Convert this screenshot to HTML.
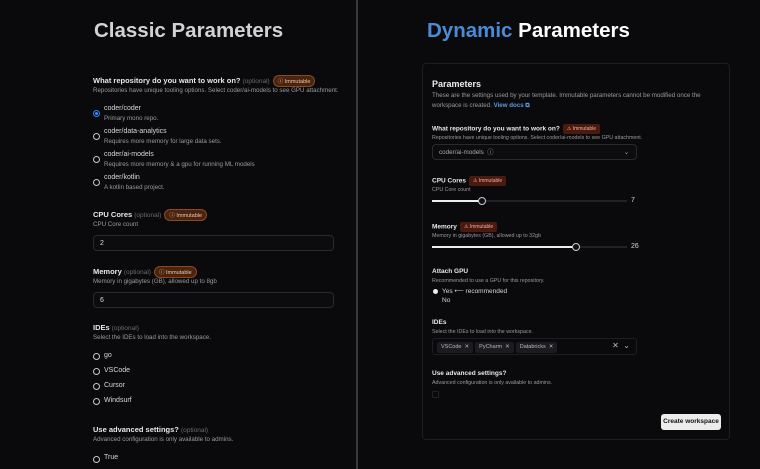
<!DOCTYPE html>
<html><head><meta charset="utf-8"><style>
*{margin:0;padding:0;box-sizing:border-box}
body{width:760px;height:469px;background:#0a0a0c;font-family:"Liberation Sans",sans-serif;color:#e4e4e7;position:relative;overflow:hidden}
.a{position:absolute;white-space:nowrap}
.h1{font-size:20.5px;font-weight:bold;top:19px}
.lbl{font-size:7.5px;font-weight:bold;color:#e8e8e8}
.opt{font-weight:normal;color:#6b6b70;font-size:6.5px}
.sub{font-size:6.2px;color:#9a9aa0}
.imm{display:inline-block;vertical-align:middle;font-size:5.5px;font-weight:normal;color:#f0c8a8;background:#4a2410;border:1px solid #8a4a20;border-radius:7px;padding:1px 4px;margin-left:3px}
.imm2{display:inline-block;vertical-align:middle;font-size:5px;font-weight:normal;color:#f0b0a0;background:#4a1a10;border-radius:2px;padding:2px 4px;margin-left:3px}
.rad{position:absolute;width:7px;height:7px;border:1px solid #c8c8c8;border-radius:50%}
.inp{position:absolute;border:1px solid #2a2a2e;border-radius:4px;background:#0c0c0e;font-size:7px;color:#ddd;padding-left:6px}
.t{font-size:7px;color:#d8d8d8}
.chip{display:inline-block;vertical-align:top;background:#1c1c20;border-radius:2px;font-size:5.5px;line-height:7px;color:#bbb;padding:2px 4px;margin-right:2px}
</style></head><body>
<div class="a" style="left:356px;top:0;width:2px;height:469px;background:#3a3a3e"></div>
<div class="a h1" style="left:94px;color:#d2d2d2">Classic Parameters</div>
<div class="a h1" style="left:427px;color:#fff"><span style="color:#4a8ad6">Dynamic</span> Parameters</div>

<!-- left -->
<div class="a lbl" style="left:93px;top:75px">What repository do you want to work on? <span class="opt">(optional)</span><span class="imm">ⓘ Immutable</span></div>
<div class="a sub" style="left:93px;top:87px">Repositories have unique tooling options. Select coder/ai-models to see GPU attachment.</div>
<div class="rad" style="left:93px;top:110px;border-color:#3b82f6;background:radial-gradient(#3b82f6 40%,transparent 45%)"></div>
<div class="a t" style="left:104px;top:105px">coder/coder</div><div class="a sub" style="left:104px;top:115px">Primary mono repo.</div>
<div class="rad" style="left:93px;top:133px"></div>
<div class="a t" style="left:104px;top:128px">coder/data-analytics</div><div class="a sub" style="left:104px;top:138px">Requires more memory for large data sets.</div>
<div class="rad" style="left:93px;top:156px"></div>
<div class="a t" style="left:104px;top:151px">coder/ai-models</div><div class="a sub" style="left:104px;top:161px">Requires more memory &amp; a gpu for running ML models</div>
<div class="rad" style="left:93px;top:179px"></div>
<div class="a t" style="left:104px;top:174px">coder/kotlin</div><div class="a sub" style="left:104px;top:184px">A kotlin based project.</div>
<div class="a lbl" style="left:93px;top:209px">CPU Cores <span class="opt">(optional)</span><span class="imm">ⓘ Immutable</span></div>
<div class="a sub" style="left:93px;top:221px">CPU Core count</div>
<div class="inp" style="left:93px;top:235px;width:241px;height:16px;line-height:15px">2</div>
<div class="a lbl" style="left:93px;top:266px">Memory <span class="opt">(optional)</span><span class="imm">ⓘ Immutable</span></div>
<div class="a sub" style="left:93px;top:278px">Memory in gigabytes (GB), allowed up to 8gb</div>
<div class="inp" style="left:93px;top:292px;width:241px;height:16px;line-height:15px">6</div>
<div class="a lbl" style="left:93px;top:323px">IDEs <span class="opt">(optional)</span></div>
<div class="a sub" style="left:93px;top:334px">Select the IDEs to load into the workspace.</div>
<div class="rad" style="left:93px;top:353px"></div><div class="a t" style="left:104px;top:352px">go</div>
<div class="rad" style="left:93px;top:368px"></div><div class="a t" style="left:104px;top:367px">VSCode</div>
<div class="rad" style="left:93px;top:383px"></div><div class="a t" style="left:104px;top:382px">Cursor</div>
<div class="rad" style="left:93px;top:398px"></div><div class="a t" style="left:104px;top:397px">Windsurf</div>
<div class="a lbl" style="left:93px;top:425px">Use advanced settings? <span class="opt">(optional)</span></div>
<div class="a sub" style="left:93px;top:436px">Advanced configuration is only available to admins.</div>
<div class="rad" style="left:93px;top:456px"></div><div class="a t" style="left:104px;top:454px">True</div>

<!-- right card -->
<div class="a" style="left:422px;top:63px;width:308px;height:377px;border:1px solid #1e1e22;border-radius:4px"></div>
<div class="a" style="left:432px;top:79px;font-size:9px;font-weight:bold;color:#eee">Parameters</div>
<div class="a sub" style="left:432px;top:91px;line-height:10px">These are the settings used by your template. Immutable parameters cannot be modified once the<br>workspace is created. <span style="color:#5b9be8;font-weight:bold">View docs ⧉</span></div>
<div class="a lbl" style="left:432px;top:124px;font-size:6.5px">What repository do you want to work on?<span class="imm2">⚠ Immutable</span></div>
<div class="a sub" style="left:432px;top:135px;font-size:5.3px">Repositories have unique tooling options. Select coder/ai-models to see GPU attachment.</div>
<div class="inp" style="left:432px;top:144px;width:205px;height:16px;line-height:15px;font-size:6.3px;color:#aaa">coder/ai-models &nbsp;ⓘ<span style="position:absolute;right:7px">⌄</span></div>
<div class="a lbl" style="left:432px;top:176px;font-size:6.5px">CPU Cores<span class="imm2">⚠ Immutable</span></div>
<div class="a sub" style="left:432px;top:187px;font-size:5.3px">CPU Core count</div>
<div class="a" style="left:432px;top:200px;width:195px;height:2px;background:#222"></div>
<div class="a" style="left:432px;top:200px;width:50px;height:2px;background:#eee"></div>
<div class="a" style="left:478px;top:197px;width:8px;height:8px;border-radius:50%;background:#111;border:1px solid #ccc"></div>
<div class="a t" style="left:631px;top:197px">7</div>
<div class="a lbl" style="left:432px;top:222px;font-size:6.5px">Memory<span class="imm2">⚠ Immutable</span></div>
<div class="a sub" style="left:432px;top:233px;font-size:5.3px">Memory in gigabytes (GB), allowed up to 32gb</div>
<div class="a" style="left:432px;top:246px;width:195px;height:2px;background:#222"></div>
<div class="a" style="left:432px;top:246px;width:144px;height:2px;background:#eee"></div>
<div class="a" style="left:572px;top:243px;width:8px;height:8px;border-radius:50%;background:#111;border:1px solid #ccc"></div>
<div class="a t" style="left:631px;top:243px">26</div>
<div class="a lbl" style="left:432px;top:268px;font-size:6.5px">Attach GPU</div>
<div class="a sub" style="left:432px;top:278px;font-size:5.3px">Recommended to use a GPU for this repository.</div>
<div class="a" style="left:433px;top:289px;width:5px;height:5px;border-radius:50%;background:#eee"></div>
<div class="a t" style="left:442px;top:287px;font-size:6.5px">Yes ⟵ recommended</div>
<div class="a t" style="left:442px;top:297px;font-size:6.5px">No</div>
<div class="a lbl" style="left:432px;top:319px;font-size:6.5px">IDEs</div>
<div class="a sub" style="left:432px;top:329px;font-size:5.3px">Select the IDEs to load into the workspace.</div>
<div class="a" style="left:432px;top:338px;width:205px;height:17px;border:1px solid #1e1e22;border-radius:3px;padding:3px 4px;font-size:0"><span class="chip">VSCode &nbsp;✕</span><span class="chip">PyCharm &nbsp;✕</span><span class="chip">Databricks &nbsp;✕</span><span style="position:absolute;right:6px;top:2px;font-size:8px;line-height:10px;color:#bbb">✕ &nbsp;⌄</span></div>
<div class="a lbl" style="left:432px;top:370px;font-size:6.5px">Use advanced settings?</div>
<div class="a sub" style="left:432px;top:380px;font-size:5.3px">Advanced configuration is only available to admins.</div>
<div class="a" style="left:432px;top:391px;width:7px;height:7px;border:1px solid #222;border-radius:1px"></div>
<div class="a" style="left:661px;top:414px;width:60px;height:16px;background:#ececec;border-radius:3px;color:#111;font-size:6.5px;font-weight:bold;text-align:center;line-height:16px">Create workspace</div>
</body></html>
